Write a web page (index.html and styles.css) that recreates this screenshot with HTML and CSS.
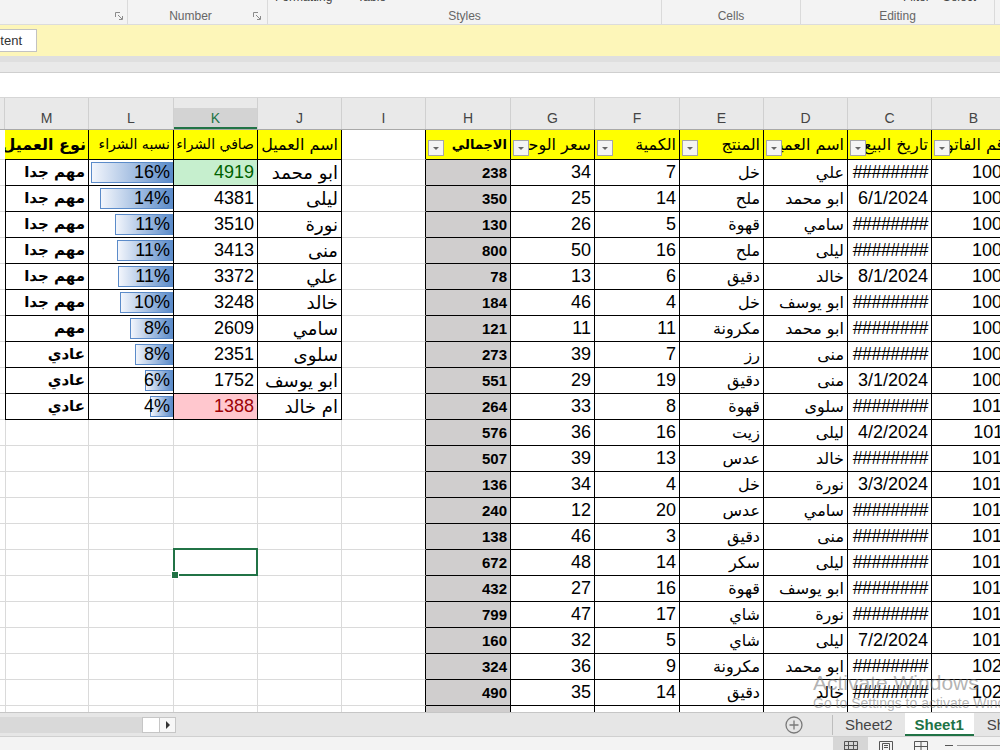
FILE: index.html
```html
<!DOCTYPE html>
<html lang="ar">
<head>
    <meta charset="UTF-8">
    <title>Sheet1 - Excel</title>
    <link rel="stylesheet" href="styles.css">
</head>
<body>
    <div class="ribbon">
        <div class="grp g0">
            <div class="btns"></div>
            <div class="glab"><span></span>
                <svg class="launch" width="8" height="8" viewBox="0 0 8 8"><path d="M0.5 5V0.5H5" fill="none" stroke="#8a8a8a"/><path d="M3 3L7 7M7.5 4V7.5H4" fill="none" stroke="#8a8a8a"/></svg>
            </div>
        </div>
        <div class="grp g1">
            <div class="btns"></div>
            <div class="glab"><span>Number</span>
                <svg class="launch" width="8" height="8" viewBox="0 0 8 8"><path d="M0.5 5V0.5H5" fill="none" stroke="#8a8a8a"/><path d="M3 3L7 7M7.5 4V7.5H4" fill="none" stroke="#8a8a8a"/></svg>
            </div>
        </div>
        <div class="grp g2">
            <div class="btns"><span class="bt1">Formatting</span><span class="bt2">Table</span></div>
            <div class="glab"><span>Styles</span></div>
        </div>
        <div class="grp g3">
            <div class="btns"></div>
            <div class="glab"><span>Cells</span></div>
        </div>
        <div class="grp g4">
            <div class="btns"><span class="bt3">Filter</span><span class="bt4">Select</span></div>
            <div class="glab"><span>Editing</span></div>
        </div>
        <div class="grp g5"></div>
    </div>

    <div class="msg">
        <div class="btnwrap"><span class="enable">Enable Content</span></div>
    </div>
    <div class="band1"></div>
    <div class="band2"></div>
    <div class="fbar"></div>

    <div class="sheet">
        <div class="cols">
            <div></div><div>M</div><div>L</div><div class="on">K</div><div>J</div><div>I</div><div>H</div><div>G</div><div>F</div><div>E</div><div>D</div><div>C</div><div>B</div>
        </div>

        <!-- row 1: headers -->
        <div class="row hrow">
            <div class="c tl"></div>
            <div class="c t y hd big">نوع العميل</div>
            <div class="c t y hd sm">نسبه الشراء</div>
            <div class="c t y hd sm">صافي الشراء</div>
            <div class="c t y hd">اسم العميل</div>
            <div class="c tl"></div>
            <div class="c t y f"><i class="fb"></i><span class="hd tot">الاجمالي</span></div>
            <div class="c t y f"><i class="fb"></i><span class="hd">سعر الوحدة</span></div>
            <div class="c t y f"><i class="fb"></i><span class="hd">الكمية</span></div>
            <div class="c t y f"><i class="fb"></i><span class="hd">المنتج</span></div>
            <div class="c t y f"><i class="fb"></i><span class="hd">اسم العميل</span></div>
            <div class="c t y f"><i class="fb"></i><span class="hd">تاريخ البيع</span></div>
            <div class="c t y f"><i class="fb"></i><span class="hd">رقم الفاتورة</span></div>
        </div>

        <div class="row">
            <div class="c tl"></div>
            <div class="c t ar b">مهم جدا</div>
            <div class="c t l"><span class="bar" style="width:82px"></span><span class="pct">16%</span></div>
            <div class="c t good">4919</div>
            <div class="c t ar jn">ابو محمد</div>
            <div class="c tl"></div>
            <div class="c t g b">238</div><div class="c t">34</div><div class="c t">7</div>
            <div class="c t ar">خل</div><div class="c t ar">علي</div><div class="c t h">########</div><div class="c t">1001</div>
        </div>
        <div class="row">
            <div class="c tl"></div>
            <div class="c t ar b">مهم جدا</div>
            <div class="c t l"><span class="bar" style="width:73px"></span><span class="pct">14%</span></div>
            <div class="c t">4381</div>
            <div class="c t ar jn">ليلى</div>
            <div class="c tl"></div>
            <div class="c t g b">350</div><div class="c t">25</div><div class="c t">14</div>
            <div class="c t ar">ملح</div><div class="c t ar">ابو محمد</div><div class="c t">6/1/2024</div><div class="c t">1002</div>
        </div>
        <div class="row">
            <div class="c tl"></div>
            <div class="c t ar b">مهم جدا</div>
            <div class="c t l"><span class="bar" style="width:58px"></span><span class="pct">11%</span></div>
            <div class="c t">3510</div>
            <div class="c t ar jn">نورة</div>
            <div class="c tl"></div>
            <div class="c t g b">130</div><div class="c t">26</div><div class="c t">5</div>
            <div class="c t ar">قهوة</div><div class="c t ar">سامي</div><div class="c t h">########</div><div class="c t">1003</div>
        </div>
        <div class="row">
            <div class="c tl"></div>
            <div class="c t ar b">مهم جدا</div>
            <div class="c t l"><span class="bar" style="width:56px"></span><span class="pct">11%</span></div>
            <div class="c t">3413</div>
            <div class="c t ar jn">منى</div>
            <div class="c tl"></div>
            <div class="c t g b">800</div><div class="c t">50</div><div class="c t">16</div>
            <div class="c t ar">ملح</div><div class="c t ar">ليلى</div><div class="c t h">########</div><div class="c t">1004</div>
        </div>
        <div class="row">
            <div class="c tl"></div>
            <div class="c t ar b">مهم جدا</div>
            <div class="c t l"><span class="bar" style="width:55px"></span><span class="pct">11%</span></div>
            <div class="c t">3372</div>
            <div class="c t ar jn">علي</div>
            <div class="c tl"></div>
            <div class="c t g b">78</div><div class="c t">13</div><div class="c t">6</div>
            <div class="c t ar">دقيق</div><div class="c t ar">خالد</div><div class="c t">8/1/2024</div><div class="c t">1005</div>
        </div>
        <div class="row">
            <div class="c tl"></div>
            <div class="c t ar b">مهم جدا</div>
            <div class="c t l"><span class="bar" style="width:53px"></span><span class="pct">10%</span></div>
            <div class="c t">3248</div>
            <div class="c t ar jn">خالد</div>
            <div class="c tl"></div>
            <div class="c t g b">184</div><div class="c t">46</div><div class="c t">4</div>
            <div class="c t ar">خل</div><div class="c t ar">ابو يوسف</div><div class="c t h">########</div><div class="c t">1006</div>
        </div>
        <div class="row">
            <div class="c tl"></div>
            <div class="c t ar b">مهم</div>
            <div class="c t l"><span class="bar" style="width:43px"></span><span class="pct">8%</span></div>
            <div class="c t">2609</div>
            <div class="c t ar jn">سامي</div>
            <div class="c tl"></div>
            <div class="c t g b">121</div><div class="c t">11</div><div class="c t">11</div>
            <div class="c t ar">مكرونة</div><div class="c t ar">ابو محمد</div><div class="c t h">########</div><div class="c t">1007</div>
        </div>
        <div class="row">
            <div class="c tl"></div>
            <div class="c t ar b">عادي</div>
            <div class="c t l"><span class="bar" style="width:38px"></span><span class="pct">8%</span></div>
            <div class="c t">2351</div>
            <div class="c t ar jn">سلوى</div>
            <div class="c tl"></div>
            <div class="c t g b">273</div><div class="c t">39</div><div class="c t">7</div>
            <div class="c t ar">رز</div><div class="c t ar">منى</div><div class="c t h">########</div><div class="c t">1008</div>
        </div>
        <div class="row">
            <div class="c tl"></div>
            <div class="c t ar b">عادي</div>
            <div class="c t l"><span class="bar" style="width:28px"></span><span class="pct">6%</span></div>
            <div class="c t">1752</div>
            <div class="c t ar jn">ابو يوسف</div>
            <div class="c tl"></div>
            <div class="c t g b">551</div><div class="c t">29</div><div class="c t">19</div>
            <div class="c t ar">دقيق</div><div class="c t ar">منى</div><div class="c t">3/1/2024</div><div class="c t">1009</div>
        </div>
        <div class="row">
            <div class="c tl"></div>
            <div class="c t ar b">عادي</div>
            <div class="c t l"><span class="bar" style="width:23px"></span><span class="pct">4%</span></div>
            <div class="c t bad">1388</div>
            <div class="c t ar jn">ام خالد</div>
            <div class="c tl"></div>
            <div class="c t g b">264</div><div class="c t">33</div><div class="c t">8</div>
            <div class="c t ar">قهوة</div><div class="c t ar">سلوى</div><div class="c t h">########</div><div class="c t">1010</div>
        </div>

        <div class="row">
            <div class="c"></div><div class="c"></div><div class="c"></div><div class="c"></div><div class="c"></div><div class="c tl"></div>
            <div class="c t g b">576</div><div class="c t">36</div><div class="c t">16</div>
            <div class="c t ar">زيت</div><div class="c t ar">ليلى</div><div class="c t">4/2/2024</div><div class="c t">1011</div>
        </div>
        <div class="row">
            <div class="c"></div><div class="c"></div><div class="c"></div><div class="c"></div><div class="c"></div><div class="c tl"></div>
            <div class="c t g b">507</div><div class="c t">39</div><div class="c t">13</div>
            <div class="c t ar">عدس</div><div class="c t ar">خالد</div><div class="c t h">########</div><div class="c t">1012</div>
        </div>
        <div class="row">
            <div class="c"></div><div class="c"></div><div class="c"></div><div class="c"></div><div class="c"></div><div class="c tl"></div>
            <div class="c t g b">136</div><div class="c t">34</div><div class="c t">4</div>
            <div class="c t ar">خل</div><div class="c t ar">نورة</div><div class="c t">3/3/2024</div><div class="c t">1013</div>
        </div>
        <div class="row">
            <div class="c"></div><div class="c"></div><div class="c"></div><div class="c"></div><div class="c"></div><div class="c tl"></div>
            <div class="c t g b">240</div><div class="c t">12</div><div class="c t">20</div>
            <div class="c t ar">عدس</div><div class="c t ar">سامي</div><div class="c t h">########</div><div class="c t">1014</div>
        </div>
        <div class="row">
            <div class="c"></div><div class="c"></div><div class="c"></div><div class="c"></div><div class="c"></div><div class="c tl"></div>
            <div class="c t g b">138</div><div class="c t">46</div><div class="c t">3</div>
            <div class="c t ar">دقيق</div><div class="c t ar">منى</div><div class="c t h">########</div><div class="c t">1015</div>
        </div>
        <div class="row">
            <div class="c"></div><div class="c"></div><div class="c"></div><div class="c sel"></div><div class="c"></div><div class="c tl"></div>
            <div class="c t g b">672</div><div class="c t">48</div><div class="c t">14</div>
            <div class="c t ar">سكر</div><div class="c t ar">ليلى</div><div class="c t h">########</div><div class="c t">1016</div>
        </div>
        <div class="row">
            <div class="c"></div><div class="c"></div><div class="c"></div><div class="c"></div><div class="c"></div><div class="c tl"></div>
            <div class="c t g b">432</div><div class="c t">27</div><div class="c t">16</div>
            <div class="c t ar">قهوة</div><div class="c t ar">ابو يوسف</div><div class="c t h">########</div><div class="c t">1017</div>
        </div>
        <div class="row">
            <div class="c"></div><div class="c"></div><div class="c"></div><div class="c"></div><div class="c"></div><div class="c tl"></div>
            <div class="c t g b">799</div><div class="c t">47</div><div class="c t">17</div>
            <div class="c t ar">شاي</div><div class="c t ar">نورة</div><div class="c t h">########</div><div class="c t">1018</div>
        </div>
        <div class="row">
            <div class="c"></div><div class="c"></div><div class="c"></div><div class="c"></div><div class="c"></div><div class="c tl"></div>
            <div class="c t g b">160</div><div class="c t">32</div><div class="c t">5</div>
            <div class="c t ar">شاي</div><div class="c t ar">ليلى</div><div class="c t">7/2/2024</div><div class="c t">1019</div>
        </div>
        <div class="row">
            <div class="c"></div><div class="c"></div><div class="c"></div><div class="c"></div><div class="c"></div><div class="c tl"></div>
            <div class="c t g b">324</div><div class="c t">36</div><div class="c t">9</div>
            <div class="c t ar">مكرونة</div><div class="c t ar">ابو محمد</div><div class="c t h">########</div><div class="c t">1020</div>
        </div>
        <div class="row">
            <div class="c"></div><div class="c"></div><div class="c"></div><div class="c"></div><div class="c"></div><div class="c tl"></div>
            <div class="c t g b">490</div><div class="c t">35</div><div class="c t">14</div>
            <div class="c t ar">دقيق</div><div class="c t ar">خالد</div><div class="c t h">########</div><div class="c t">1021</div>
        </div>
        <div class="row">
            <div class="c"></div><div class="c"></div><div class="c"></div><div class="c"></div><div class="c"></div><div class="c tl"></div>
            <div class="c t g"></div><div class="c t"></div><div class="c t"></div>
            <div class="c t"></div><div class="c t"></div><div class="c t"></div><div class="c t"></div>
        </div>
    </div>

    <div class="tabbar">
        <div class="hscroll">
            <span class="track"></span><span class="thumb"></span><span class="arrow"></span>
        </div>
        <span class="grip"></span>
        <svg class="add" width="18" height="18" viewBox="0 0 18 18"><circle cx="9" cy="9" r="8" fill="none" stroke="#7a7a7a" stroke-width="1.3"/><path d="M9 4.5V13.5M4.5 9H13.5" stroke="#7a7a7a" stroke-width="1.3"/></svg>
        <span class="tsep"></span>
        <span class="tab">Sheet2</span>
        <span class="tab on">Sheet1</span>
        <span class="tab last">Sheet3</span>
    </div>

    <div class="status">
        <span class="view on">
            <svg width="14" height="12" viewBox="0 0 14 12"><path d="M0.5 0.5H13.5V11.5H0.5ZM0.5 4.5H13.5M0.5 8.5H13.5M4.5 0.5V11.5M9.5 0.5V11.5" fill="none" stroke="#555"/></svg>
        </span>
        <span class="view">
            <svg width="14" height="12" viewBox="0 0 14 12"><path d="M0.5 0.5H13.5V11.5H0.5ZM3.5 2.5H10.5V11.5H3.5ZM5 4.5H9M5 6.5H9" fill="none" stroke="#555"/></svg>
        </span>
        <span class="view">
            <svg width="14" height="12" viewBox="0 0 14 12"><path d="M0.5 0.5H13.5V11.5H0.5ZM7 0.5V11.5M0.5 5.5H13.5" fill="none" stroke="#555"/></svg>
        </span>
        <span class="zoomminus"></span>
        <span class="zoomline"></span>
    </div>

    <div class="wm">
        <div class="wm1">Activate Windows</div>
        <div class="wm2">Go to Settings to activate Windows.</div>
    </div>
</body>
</html>
```

FILE: styles.css
```css
* {
    box-sizing: border-box;
}
body {
    margin: 0;
    width: 1000px;
    height: 750px;
    overflow: hidden;
    position: relative;
    font-family: "Liberation Sans", "DejaVu Sans", sans-serif;
    background: #fff;
    --cols: 5px 84px 85px 84px 84px 84px 85px 84px 85px 84px 84px 84px 84px;
}

/* ribbon (bottom strip only) */
.ribbon {
    display: flex;
    height: 25px;
    background: #f3f3f3;
    border-bottom: 1px solid #dcdcdc;
    color: #666;
    font-size: 12px;
}
.grp {
    flex: none;
    height: 24px;
    display: flex;
    flex-direction: column;
    border-right: 1px solid #dadada;
}
.g0 { width: 128px; }
.g1 { width: 140px; }
.g2 { width: 394px; }
.g3 { width: 139px; }
.g4 { width: 194px; }
.g5 { flex: 1; border-right: none; }
.btns {
    height: 8px;
    display: flex;
    align-items: flex-end;
    overflow: hidden;
    color: #444;
}
.btns span {
    line-height: 12px;
    margin-bottom: 5px;
}
.bt1 { margin-left: 7px; }
.bt2 { margin-left: 25px; }
.bt3 { margin-left: 102px; }
.bt4 { margin-left: 13px; }
.glab {
    flex: 1;
    display: flex;
    align-items: center;
}
.glab span {
    flex: 1;
    text-align: center;
    line-height: 16px;
}
.launch {
    flex: none;
    margin-right: 4px;
}
.g1 .launch { margin-right: 6px; }

/* message bar */
.msg {
    height: 31px;
    background: #fdf6b9;
    display: flex;
}
.btnwrap {
    width: 37px;
    display: flex;
    justify-content: flex-end;
    padding-top: 4px;
}
.enable {
    flex: none;
    height: 23px;
    border: 1px solid #c2c2c2;
    background: #fff;
    color: #333;
    font-size: 13px;
    line-height: 21px;
    padding: 0 14px 0 10px;
    white-space: nowrap;
}
.band1 { height: 6px; background: #dfdfdf; }
.band2 { height: 11px; background: #e9e9e9; border-bottom: 1px solid #cfcfcf; }
.fbar { height: 25px; background: #fff; border-bottom: 1px solid #d6d6d6; }

/* sheet grid */
.sheet {
    height: 614px;
    overflow: hidden;
}
.cols {
    display: grid;
    grid-template-columns: var(--cols);
    height: 32px;
    background: #e9e9e9;
    border-bottom: 1px solid #a9a9a9;
}
.cols div {
    border-right: 1px solid #d0d0d0;
    padding-top: 10px;
    line-height: 20px;
    text-align: center;
    font-size: 14px;
    color: #444;
}
.cols .on {
    background: linear-gradient(#e9e9e9 10px, #d3d3d3 10px);
    color: #217346;
    box-shadow: inset 0 -2px #217346;
}
.row {
    display: grid;
    grid-template-columns: var(--cols);
    height: 26px;
}
.row.hrow { height: 30px; }
.c {
    border-right: 1px solid #dadada;
    border-bottom: 1px solid #dadada;
    padding: 0 3px 0 2px;
    text-align: right;
    white-space: nowrap;
    overflow: hidden;
    font-size: 18px;
    line-height: 25px;
    color: #000;
}
.hrow .c { line-height: 29px; }
.t { border-color: #000; }
.tl { border-right-color: #000; }
.y { background: #ffff00; }
.g { background: #d0cece; font-size: 15px; }
.b { font-weight: bold; }
.ar {
    direction: rtl;
    font-family: "DejaVu Sans", sans-serif;
    font-size: 16px;
}
.ar.jn { font-size: 18px; }
.ar.b { font-size: 15px; }
.hd {
    direction: rtl;
    font-family: "DejaVu Sans", sans-serif;
    font-size: 16px;
}
.hd.sm { font-size: 14px; }
.hd.tot { font-size: 13px; font-weight: bold; }
.big { font-size: 16px; font-weight: bold; padding-right: 2px; }
.h { letter-spacing: -0.6px; }
.good { background: #c6efce; color: #006100; }
.bad { background: #ffc7ce; color: #9c0006; }

/* header cells with filter buttons */
.f {
    display: flex;
    padding: 0 3px 0 2px;
}
.f span {
    flex: 1;
    min-width: 0;
    overflow: hidden;
    text-align: right;
}
.fb {
    flex: none;
    align-self: flex-end;
    width: 16px;
    height: 16px;
    margin-bottom: 3px;
    border: 1px solid #a6a6a6;
    background: #f4f4f4;
    display: flex;
    align-items: center;
    justify-content: center;
}
.fb::after {
    content: "";
    border-left: 3px solid transparent;
    border-right: 3px solid transparent;
    border-top: 3px solid #666;
}

/* data bars */
.l {
    display: grid;
    padding: 0;
}
.bar {
    grid-area: 1 / 1;
    justify-self: end;
    margin: 2px 0;
    border: 1px solid #5b8bc9;
    background: linear-gradient(to right, #f3f6fc, #5b8bc9);
}
.pct {
    grid-area: 1 / 1;
    padding-right: 3px;
    text-align: right;
}

/* selected cell */
.sel {
    position: relative;
    overflow: visible;
    z-index: 2;
}
.sel::after {
    content: "";
    position: absolute;
    left: -1px;
    right: -1px;
    top: -2px;
    bottom: -1px;
    border: 2px solid #217346;
}
.sel::before {
    content: "";
    position: absolute;
    left: -3px;
    bottom: -4px;
    width: 6px;
    height: 6px;
    background: #217346;
    border: 1px solid #fff;
    z-index: 1;
}

/* sheet tabs */
.tabbar {
    height: 25px;
    background: #e6e6e6;
    border-top: 1px solid #c6c6c6;
    border-bottom: 1px solid #d0d0d0;
    display: flex;
    align-items: center;
    font-size: 15px;
}
.hscroll {
    width: 176px;
    display: flex;
    align-items: center;
}
.track { width: 142px; height: 16px; background: #d9d9d9; }
.thumb { width: 18px; height: 16px; background: #fff; border: 1px solid #c6c6c6; }
.arrow {
    width: 16px;
    height: 16px;
    background: #f7f7f7;
    border: 1px solid #c6c6c6;
    border-left: none;
    display: flex;
    align-items: center;
    justify-content: center;
}
.arrow::after {
    content: "";
    border-top: 4px solid transparent;
    border-bottom: 4px solid transparent;
    border-left: 4px solid #333;
}
.grip {
    margin-left: 13px;
    width: 3px;
    height: 12px;
    background: radial-gradient(circle, #9a9a9a 1px, transparent 1.3px) 0 0 / 3px 4px repeat-y;
}
.add {
    flex: none;
    margin-left: 596px;
}
.tsep {
    flex: none;
    margin-left: 29px;
    width: 1px;
    height: 20px;
    background: #bdbdbd;
}
.tab {
    flex: none;
    padding: 0 12px;
    height: 100%;
    line-height: 23px;
    color: #444;
}
.tab.on {
    background: #fff;
    color: #217346;
    font-weight: bold;
    padding: 0 10px;
    border-bottom: 2px solid #217346;
}
.tab.last { padding-left: 13px; }

/* status bar */
.status {
    height: 13px;
    background: #f3f3f3;
    display: flex;
    padding-left: 833px;
}
.view {
    flex: none;
    width: 35px;
    display: flex;
    justify-content: center;
    padding-top: 4px;
    overflow: hidden;
}
.view.on { background: #d6d6d6; }
.zoomminus {
    flex: none;
    width: 8px;
    height: 1px;
    margin: 8px 0 0 7px;
    background: #555;
}
.zoomline {
    flex: 1;
    height: 1px;
    margin: 8px 0 0 4px;
    background: #999;
}

/* watermark */
.wm {
    position: absolute;
    left: 813px;
    top: 671px;
    color: rgba(115, 115, 115, 0.55);
    white-space: nowrap;
    pointer-events: none;
}
.wm1 { font-size: 21px; line-height: 24px; }
.wm2 { font-size: 14px; line-height: 16px; }
```
